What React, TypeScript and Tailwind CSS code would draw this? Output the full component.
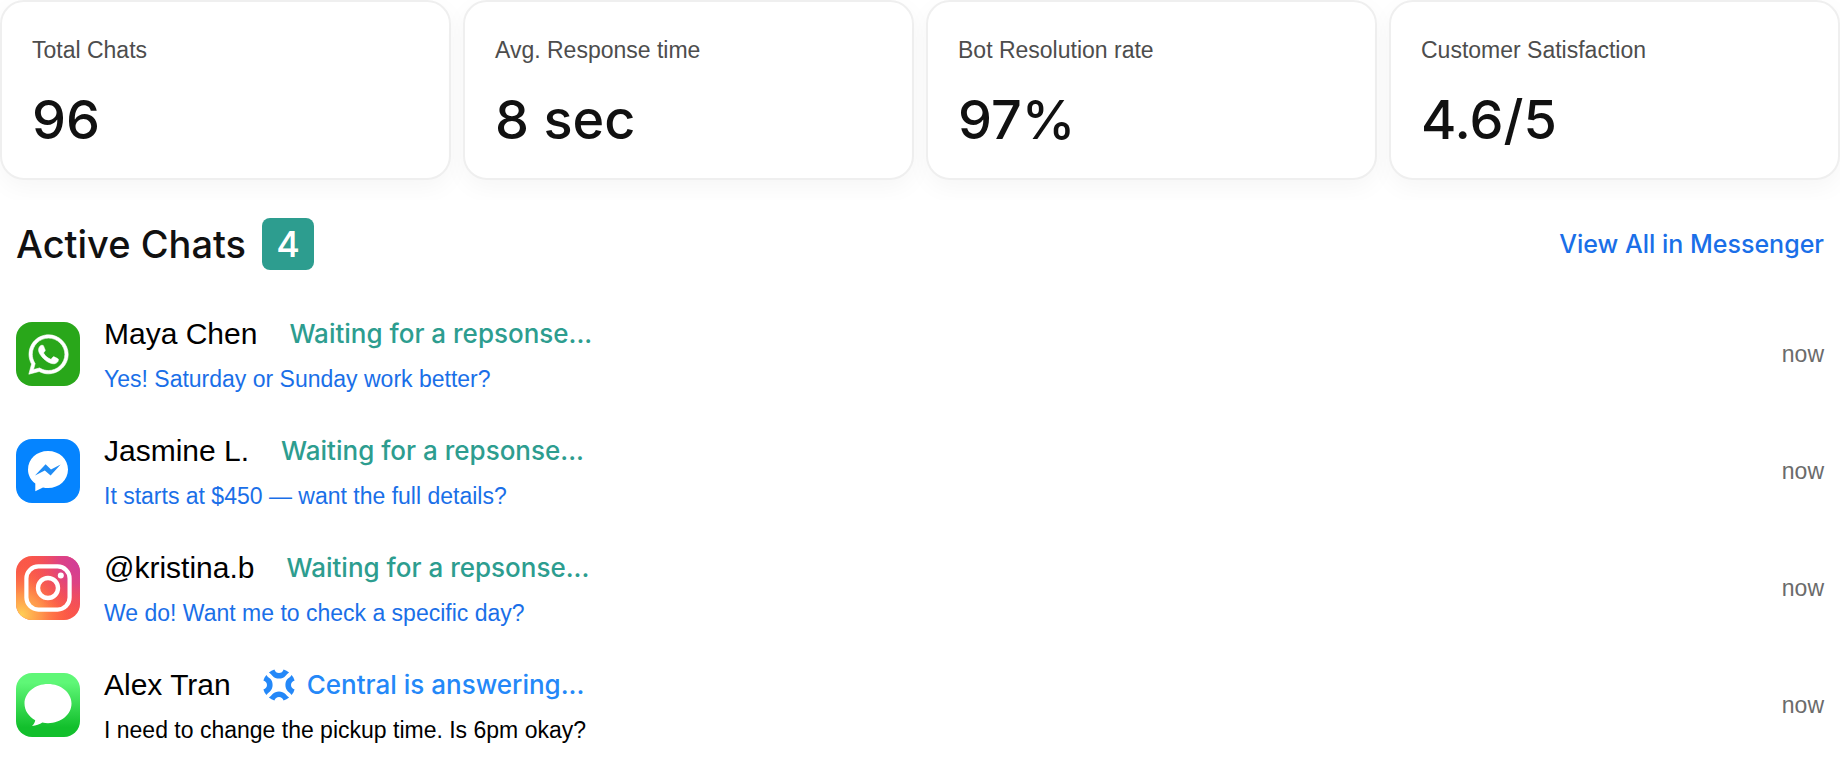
import type { ReactNode } from "react";
import { FaWhatsapp } from "react-icons/fa";

const STATS = [
  { label: "Total Chats", value: "96" },
  { label: "Avg. Response time", value: "8 sec" },
  { label: "Bot Resolution rate", value: "97%" },
  { label: "Customer Satisfaction", value: "4.6/5" },
];

interface Chat {
  name: string;
  message: string;
  time: string;
  icon: ReactNode;
  botAnswering?: boolean;
}

const CHATS: Chat[] = [
  {
    name: "Maya Chen",
    message: "Yes! Saturday or Sunday work better?",
    time: "now",
    icon: <WhatsAppIcon />,
  },
  {
    name: "Jasmine L.",
    message: "It starts at $450 — want the full details?",
    time: "now",
    icon: <MessengerIcon />,
  },
  {
    name: "@kristina.b",
    message: "We do! Want me to check a specific day?",
    time: "now",
    icon: <InstagramIcon />,
  },
  {
    name: "Alex Tran",
    message: "I need to change the pickup time. Is 6pm okay?",
    time: "now",
    icon: <MessagesIcon />,
    botAnswering: true,
  },
];

function WhatsAppIcon() {
  return (
    <div className="flex size-16 shrink-0 items-center justify-center rounded-2xl bg-[#29a71a]">
      <FaWhatsapp className="size-[45px] overflow-visible text-white" stroke="white" strokeWidth={7} />
    </div>
  );
}

function MessengerIcon() {
  return (
    <svg viewBox="0 0 64 64" className="size-16 shrink-0 rounded-2xl" aria-hidden="true">
      <rect width="64" height="64" fill="#0584ff" />
      <path
        d="M32 12C20.7 12 12 20 12 30.5C12 36.3 14.8 41.2 19.3 44.6V52.2L27 48.4C28.6 48.8 30.3 49 32 49C43.3 49 52 41 52 30.5C52 20 43.3 12 32 12Z"
        fill="#fff"
      />
      <path d="M19 36.6L29.6 25.2L35 30.4L44.6 25.6L34.6 36.6L28.8 31.6Z" fill="#1f8cf5" />
    </svg>
  );
}

function InstagramIcon() {
  return (
    <svg viewBox="0 0 64 64" className="size-16 shrink-0 rounded-2xl" aria-hidden="true">
      <defs>
        <linearGradient id="ig-base" x1="0" y1="0" x2="1" y2="0">
          <stop offset="0" stopColor="#f9574a" />
          <stop offset="0.6" stopColor="#ff5a42" />
          <stop offset="1" stopColor="#f8544e" />
        </linearGradient>
        <radialGradient id="ig-yellow" cx="0.08" cy="0.92" r="0.8">
          <stop offset="0" stopColor="#ffd055" />
          <stop offset="0.4" stopColor="#ff9f4c" stopOpacity="0.85" />
          <stop offset="1" stopColor="#ff6040" stopOpacity="0" />
        </radialGradient>
        <radialGradient id="ig-pink" cx="1" cy="0.1" r="0.85">
          <stop offset="0" stopColor="#cf3c9c" />
          <stop offset="0.4" stopColor="#d93f8c" stopOpacity="0.85" />
          <stop offset="1" stopColor="#f24c5c" stopOpacity="0" />
        </radialGradient>
      </defs>
      <rect width="64" height="64" fill="url(#ig-base)" />
      <rect width="64" height="64" fill="url(#ig-yellow)" />
      <rect width="64" height="64" fill="url(#ig-pink)" />
      <rect x="10.4" y="10.4" width="43.2" height="43.2" rx="12" fill="none" stroke="#fff" strokeWidth="4.2" />
      <circle cx="32" cy="32" r="10" fill="none" stroke="#fff" strokeWidth="4.4" />
      <circle cx="44.8" cy="19.4" r="3" fill="#fff" />
    </svg>
  );
}

function MessagesIcon() {
  return (
    <svg viewBox="0 0 64 64" className="size-16 shrink-0 rounded-2xl" aria-hidden="true">
      <defs>
        <linearGradient id="messages-bg" x1="0" y1="0" x2="0" y2="1">
          <stop offset="0.15" stopColor="#5ff777" />
          <stop offset="0.85" stopColor="#12bf2c" />
        </linearGradient>
      </defs>
      <rect width="64" height="64" fill="url(#messages-bg)" />
      <path
        d="M32 11C19 11 8.5 19.6 8.5 30.6C8.5 37.6 12.6 43.6 19.2 47.2C19 49.4 17.8 51.4 16 53C20.2 52.8 23.6 51.4 26.4 49.6C28.2 50 30.1 50.2 32 50.2C45 50.2 55.5 41.6 55.5 30.6C55.5 19.6 45 11 32 11Z"
        fill="#fff"
      />
    </svg>
  );
}

// Four identical arcs turned around the centre
function CentralIcon() {
  return (
    <svg viewBox="0 0 32 32" className="size-8 shrink-0" aria-hidden="true">
      {[0, 90, 180, 270].map((angle) => (
        <path
          key={angle}
          transform={`rotate(${angle} 16 16)`}
          d="M11.4 0.4C12.2 2.6 13.8 4 16 4C18.2 4 19.8 2.6 20.6 0.4C22.6 1 24.5 2 26.1 3.4C24.8 4.2 23.6 5.4 22.4 7C20.8 8.8 18.6 9.6 16 9.6C13.4 9.6 11.2 8.8 9.6 7C8.4 5.4 7.2 4.2 5.9 3.4C7.5 2 9.4 1 11.4 0.4Z"
          fill="#2488f8"
        />
      ))}
    </svg>
  );
}

function StatCard({ label, value }: { label: string; value: string }) {
  return (
    <div className="flex flex-col gap-6 rounded-3xl border-2 border-[#efefef] bg-white px-[30px] pt-8 pb-7 shadow-[0_8px_24px_rgba(0,0,0,0.04)]">
      <span className="text-[23px] leading-8 text-[#4d4d4d]">{label}</span>
      <span className="font-[Inter,sans-serif] text-[54px] leading-[60px] font-medium text-[#111]">{value}</span>
    </div>
  );
}

function ChatRow({ chat }: { chat: Chat }) {
  return (
    <li className="flex items-center gap-6">
      {chat.icon}
      <div className="flex min-w-0 flex-1 flex-col">
        <div className="flex items-center gap-8">
          <span className="text-[30px] leading-[50px] text-black">{chat.name}</span>
          {chat.botAnswering ? (
            <span className="flex items-center gap-3 font-[Inter,sans-serif] text-[26px] leading-[50px] font-medium text-[#2488f8]">
              <CentralIcon />
              Central is answering...
            </span>
          ) : (
            <span className="font-[Inter,sans-serif] text-[26px] leading-[50px] font-medium text-[#2d9d8f]">
              Waiting for a repsonse...
            </span>
          )}
        </div>
        <p className={`text-[23px] leading-10 ${chat.botAnswering ? "text-black" : "text-[#1a6fe8]"}`}>
          {chat.message}
        </p>
      </div>
      <span className="text-[23px] leading-8 text-[#6b6b6b]">{chat.time}</span>
    </li>
  );
}

export default function App() {
  return (
    <main className="bg-white font-['Liberation_Sans',Arial,sans-serif]">
      {/* Stats */}
      <section className="grid grid-cols-4 gap-3 overflow-hidden pb-5">
        {STATS.map((stat) => (
          <StatCard key={stat.label} label={stat.label} value={stat.value} />
        ))}
      </section>

      {/* Active chats */}
      <section className="px-4 pt-[18px]">
        <div className="flex items-center justify-between">
          <div className="flex items-center gap-4">
            <h2 className="font-[Inter,sans-serif] text-[38px] leading-[52px] font-medium text-[#111]">Active Chats</h2>
            <span className="flex size-[52px] items-center justify-center rounded-lg bg-[#2d9d8f] font-[Inter,sans-serif] text-[36px] leading-none font-medium text-white">
              4
            </span>
          </div>
          <a href="#messenger" className="font-[Inter,sans-serif] text-[25px] leading-[52px] font-medium text-[#1a6fe8]">
            View All in Messenger
          </a>
        </div>

        <ul className="mt-[39px] flex flex-col gap-[27px]">
          {CHATS.map((chat) => (
            <ChatRow key={chat.name} chat={chat} />
          ))}
        </ul>
      </section>
    </main>
  );
}
